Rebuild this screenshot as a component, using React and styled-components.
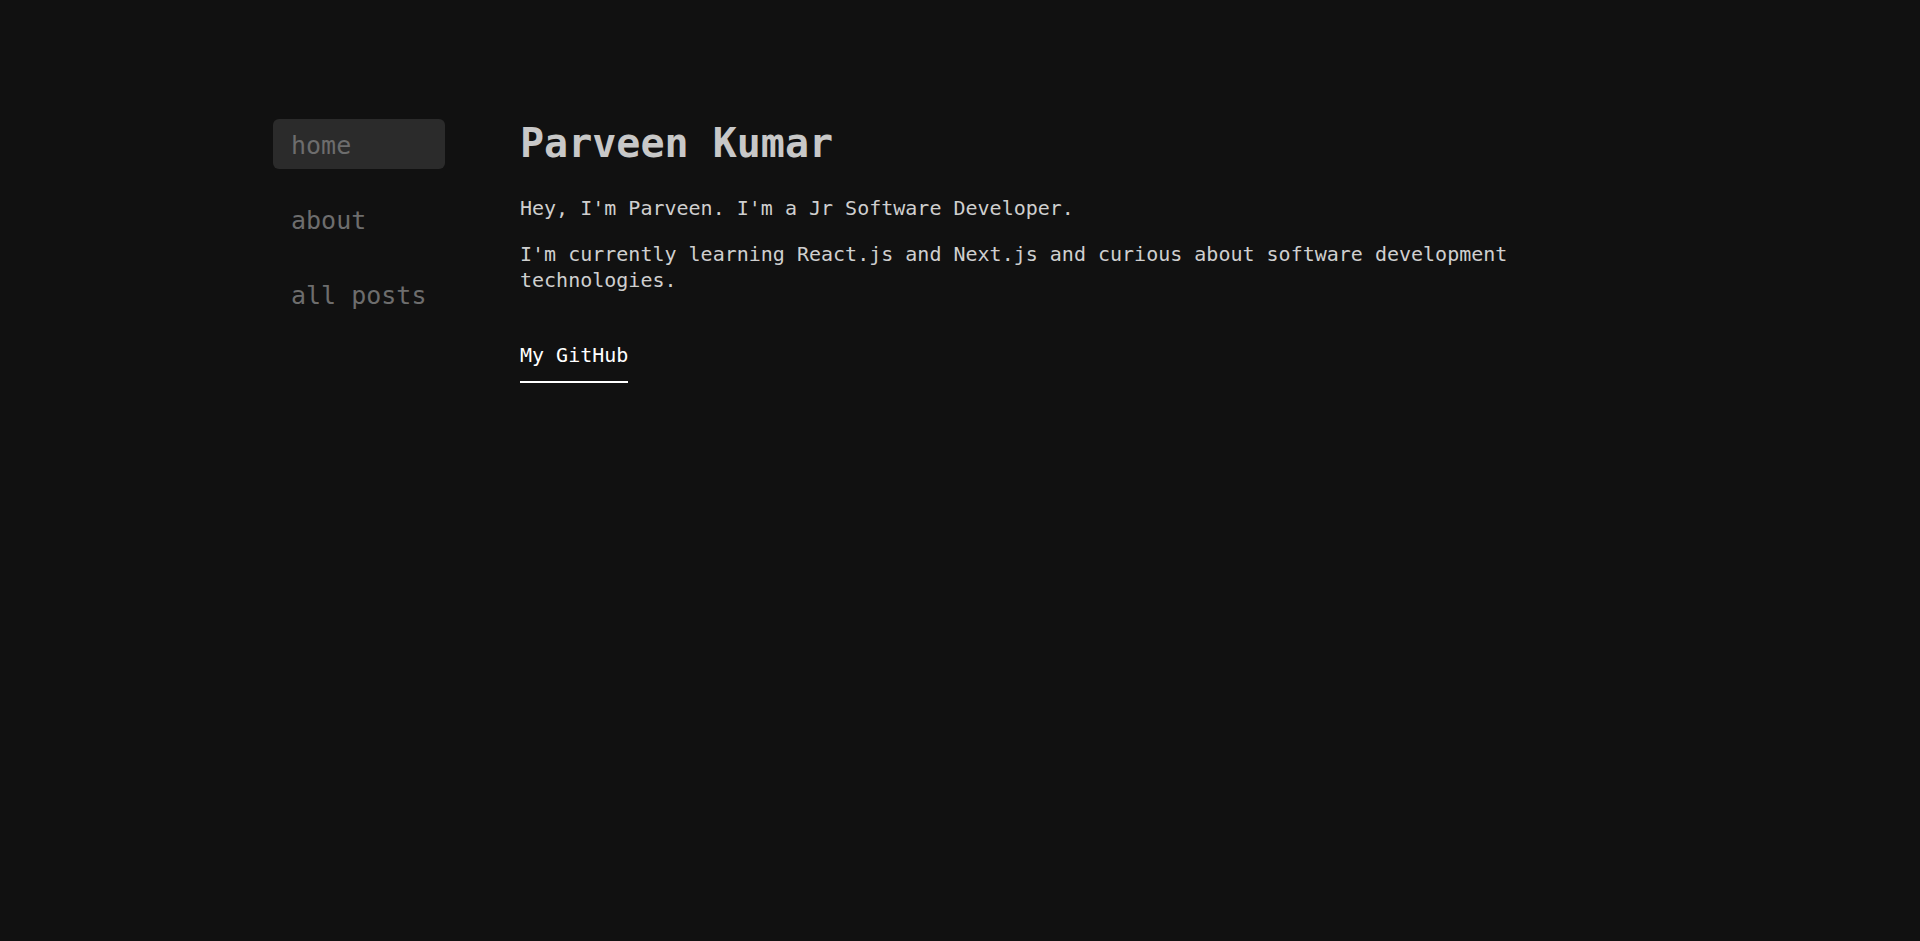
import React from "react";
import styled, { createGlobalStyle } from "styled-components";

const GlobalStyle = createGlobalStyle`
  html, body {
    margin: 0;
    padding: 0;
    background: #111111;
  }
  body {
    font-family: "DejaVu Sans Mono", "Liberation Mono", monospace;
    min-height: 941px;
  }
`;

const Page = styled.div`
  display: flex;
  align-items: flex-start;
  gap: 75px;
  width: 1374px;
  margin: 0 auto;
  padding-top: 119px;
`;

const Nav = styled.nav`
  display: flex;
  flex-direction: column;
  gap: 25px;
  width: 172px;
  flex-shrink: 0;
`;

const NavItem = styled.a`
  display: block;
  padding: 14px 18px 10px;
  font-size: 25px;
  line-height: 26px;
  color: #6d6d6d;
  text-decoration: none;
  border-radius: 6px;
  background: ${(p) => (p.$active ? "#2b2b2b" : "transparent")};
`;

const Main = styled.main`
  flex: 1;
  min-width: 0;
`;

const Title = styled.h1`
  margin: 0 0 28px;
  font-size: 40px;
  line-height: 48px;
  font-weight: 700;
  color: #c8c8c8;
`;

const Para = styled.p`
  margin: 0 0 ${(p) => (p.$last ? "0" : "20px")};
  font-size: 20px;
  line-height: 26px;
  color: #cfcfcf;
`;

const LinkRow = styled.div`
  margin-top: 49px;
`;

const GitLink = styled.a`
  display: inline-block;
  font-size: 20px;
  line-height: 26px;
  color: #ffffff;
  text-decoration: none;
  padding-bottom: 13px;
  border-bottom: 2px solid #ffffff;
`;

export default function App() {
  return (
    <>
      <GlobalStyle />
      <Page>
        <Nav>
          <NavItem $active href="#">home</NavItem>
          <NavItem href="#">about</NavItem>
          <NavItem href="#">all posts</NavItem>
        </Nav>
        <Main>
          <Title>Parveen Kumar</Title>
          <Para>Hey, I'm Parveen. I'm a Jr Software Developer.</Para>
          <Para $last>
            I'm currently learning React.js and Next.js and curious about
            software development technologies.
          </Para>
          <LinkRow>
            <GitLink href="#">My GitHub</GitLink>
          </LinkRow>
        </Main>
      </Page>
    </>
  );
}
